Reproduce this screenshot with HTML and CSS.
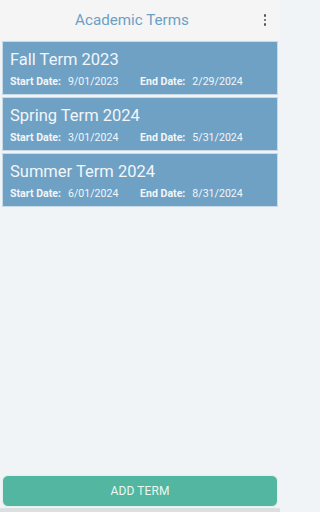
FILE: index.html
```html
<!DOCTYPE html>
<html>
<head>
<meta charset="utf-8">
<link rel="stylesheet" href="styles.css">
</head>
<body>
<div class="app">
  <header class="bar">
    <div class="title">Academic Terms</div>
    <div class="menu"><span></span><span></span><span></span></div>
  </header>
  <main class="list">
    <div class="card">
      <div class="name">Fall Term 2023</div>
      <div class="dates">
        <div class="d"><b>Start Date:</b><span>9/01/2023</span></div>
        <div class="d"><b>End Date:</b><span>2/29/2024</span></div>
      </div>
    </div>
    <div class="card">
      <div class="name">Spring Term 2024</div>
      <div class="dates">
        <div class="d"><b>Start Date:</b><span>3/01/2024</span></div>
        <div class="d"><b>End Date:</b><span>5/31/2024</span></div>
      </div>
    </div>
    <div class="card">
      <div class="name">Summer Term 2024</div>
      <div class="dates">
        <div class="d"><b>Start Date:</b><span>6/01/2024</span></div>
        <div class="d"><b>End Date:</b><span>8/31/2024</span></div>
      </div>
    </div>
  </main>
  <footer class="foot">
    <button class="add">ADD TERM</button>
  </footer>
</div>
</body>
</html>
```
FILE: styles.css
```css
* { box-sizing: border-box; }
html { background: #f0f4f7; }
html, body { margin: 0; padding: 0; }
body {
  width: 280px;
  height: 512px;
  overflow: hidden;
  font-family: Roboto, "Noto Sans", sans-serif;
  background: #f0f4f7;
}
.app {
  height: 512px;
  display: flex;
  flex-direction: column;
}
.bar {
  height: 40px;
  background: #f5f5f5;
  display: flex;
  align-items: center;
  justify-content: center;
  position: relative;
}
.title {
  color: #6d9fc4;
  font-size: 15.2px;
  margin-left: -16px;
}
.menu {
  position: absolute;
  right: 14px;
  top: 14px;
  display: flex;
  flex-direction: column;
  gap: 2px;
}
.menu span {
  width: 2.5px;
  height: 2.5px;
  background: #555;
  border-radius: 1px;
}
.list {
  flex: 1;
  padding: 1px 2px 0;
  display: flex;
  flex-direction: column;
  gap: 2px;
}
.card {
  height: 54px;
  background: #6fa1c4;
  border: 1px solid #c9dbe8;
  padding: 8px 0 0 7px;
  color: #f2f6fa;
}
.name {
  font-size: 16.5px;
  line-height: 20px;
}
.dates {
  display: flex;
  margin-top: 4px;
  font-size: 10.6px;
  line-height: 15px;
}
.d { display: flex; gap: 7px; }
.d:first-child { width: 130px; }
.d b { font-weight: 700; }
.foot {
  padding: 0 2px 1px;
  border-bottom: 4px solid #dcdfe1;
}
.add {
  display: block;
  width: 100%;
  height: 32px;
  background: #52b6a0;
  border: 1px solid #e8f0ee;
  border-radius: 6px;
  color: #eaf6f2;
  font-family: Roboto, sans-serif;
  font-size: 12px;
  letter-spacing: 0.1px;
}
```
